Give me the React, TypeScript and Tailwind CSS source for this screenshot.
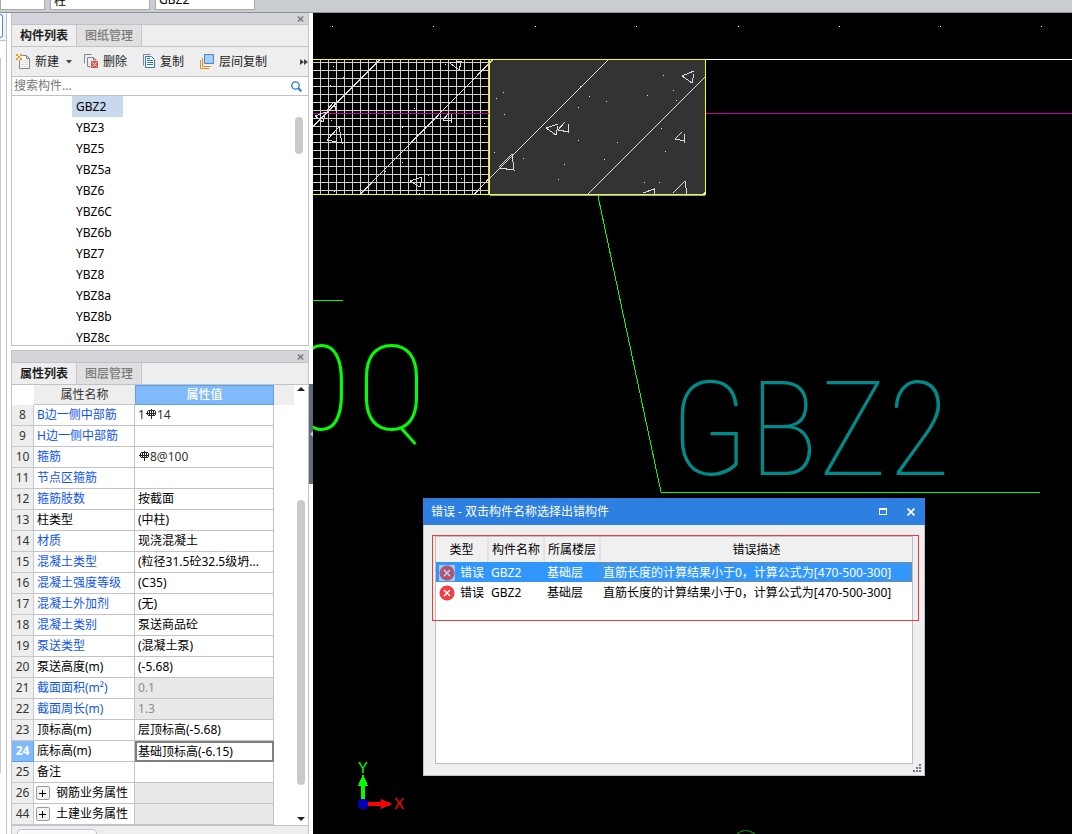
import React from "react";

const treeItems = ["GBZ2", "YBZ3", "YBZ5", "YBZ5a", "YBZ6", "YBZ6C", "YBZ6b", "YBZ7", "YBZ8", "YBZ8a", "YBZ8b", "YBZ8c"];

type Row = {
  no: number;
  name: string;
  value?: React.ReactNode;
  blue?: boolean;
  disabled?: boolean;
  active?: boolean;
  group?: boolean;
};

function Rebar() {
  return (
    <svg width="10" height="10" viewBox="0 0 10 10" fill="none" stroke="#000" className="mx-px inline-block align-baseline" shapeRendering="crispEdges" aria-hidden="true">
      <path d="M5.5 0v10M2 1.5h7M1.500 2v4M9.500 2v4M2 6.500h7M0 4.500h10M3.500 1v5M7.500 1v5" strokeOpacity=".85" />
    </svg>
  );
}

const rows: Row[] = [
  { no: 8, name: "B边一侧中部筋", value: <span className="text-[#333]">1<Rebar />14</span>, blue: true },
  { no: 9, name: "H边一侧中部筋", blue: true },
  { no: 10, name: "箍筋", value: <span className="text-[#333]"><Rebar />8@100</span>, blue: true },
  { no: 11, name: "节点区箍筋", blue: true },
  { no: 12, name: "箍筋肢数", value: "按截面", blue: true },
  { no: 13, name: "柱类型", value: "(中柱)" },
  { no: 14, name: "材质", value: "现浇混凝土", blue: true },
  { no: 15, name: "混凝土类型", value: "(粒径31.5砼32.5级坍...", blue: true },
  { no: 16, name: "混凝土强度等级", value: "(C35)", blue: true },
  { no: 17, name: "混凝土外加剂", value: "(无)", blue: true },
  { no: 18, name: "混凝土类别", value: "泵送商品砼", blue: true },
  { no: 19, name: "泵送类型", value: "(混凝土泵)", blue: true },
  { no: 20, name: "泵送高度(m)", value: "(-5.68)" },
  { no: 21, name: "截面面积(m²)", value: "0.1", blue: true, disabled: true },
  { no: 22, name: "截面周长(m)", value: "1.3", blue: true, disabled: true },
  { no: 23, name: "顶标高(m)", value: "层顶标高(-5.68)" },
  { no: 24, name: "底标高(m)", value: "基础顶标高(-6.15)", active: true },
  { no: 25, name: "备注" },
  { no: 26, name: "钢筋业务属性", group: true, disabled: true },
  { no: 44, name: "土建业务属性", group: true, disabled: true },
];

const errors = [
  { type: "错误", name: "GBZ2", floor: "基础层", text: "直筋长度的计算结果小于0，计算公式为[470-500-300]" },
  { type: "错误", name: "GBZ2", floor: "基础层", text: "直筋长度的计算结果小于0，计算公式为[470-500-300]" },
];

const vGrid = Array.from({ length: 22 }, (_, i) => 320.5 + i * 8);
const hGrid = Array.from({ length: 17 }, (_, i) => 62.5 + i * 8);
const rulerDots = [332, 433, 535, 636, 738, 839, 940, 1041];
const specks = [
  [503, 92], [496, 98], [504, 114], [663, 75], [673, 90], [647, 95], [676, 100], [589, 96], [606, 101], [580, 86],
  [578, 107], [578, 140], [617, 142], [661, 128], [665, 151], [494, 152], [523, 158], [564, 164], [604, 159],
  [558, 179], [644, 182], [659, 182], [333, 66], [343, 77], [330, 85], [445, 64], [417, 89], [414, 108],
  [484, 123], [331, 120], [389, 139], [402, 162], [428, 175], [461, 178], [334, 191], [419, 193], [385, 171], [402, 127],
];

function PanelHead({ tabs }: { tabs: [string, string] }) {
  return (
    <>
      <div className="flex h-3 shrink-0 items-center justify-end border-b border-[#bfc2c8] bg-[#d3d5da] pr-1">
        <button aria-label="关闭" className="flex h-2 w-2 items-center justify-center">
          <svg width="7" height="6" viewBox="0 0 7 6" stroke="#777" strokeWidth="1.4"><path d="M.8 .5 6.2 5.5M6.2 .5 .8 5.5" /></svg>
        </button>
      </div>
      <div role="tablist" className="flex h-[22px] shrink-0 border-b border-[#bfc2c8] bg-[#eeeeee]">
        <button role="tab" aria-selected="true" className="w-16 font-bold text-[#222]">{tabs[0]}</button>
        <button role="tab" aria-selected="false" className="w-[66px] border-x border-[#c5c8cd] bg-[#e0e0e0] font-medium text-[#7b7b7b]">{tabs[1]}</button>
      </div>
    </>
  );
}

function Toolbar() {
  return (
    <div className="flex h-[30px] shrink-0 items-center border-b border-[#bfc2c8] bg-[#eeeeee] pl-1 text-[#222]">
      <button className="flex w-[68px] items-center gap-1">
        <svg width="15" height="15" viewBox="0 0 15 15" fill="none">
          <path d="M3.5 1.5h7l3 3v10h-10z" fill="#fafafa" stroke="#7b8794" />
          <path d="M10.5 1.5v3h3" stroke="#7b8794" />
          <path d="M5 6.5h7M5 8.5h7M5 10.5h7M5 12.5h7" stroke="#ddd" />
          <path d="M0 0h6v6H0z" fill="#eee" />
          <path d="M0 0h2v2H0zM4 0h2v2H4zM2 2h2v2H2zM0 4h2v2H0zM4 4h2v2H4z" fill="#f39a1e" />
        </svg>
        <span className="flex-1 text-left">新建</span>
        <svg width="6" height="4" viewBox="0 0 6 4" className="mr-3"><path d="M0 0h6L3 3.5z" fill="#444" /></svg>
      </button>
      <button className="flex w-[58px] items-center gap-1">
        <svg width="15" height="15" viewBox="0 0 15 15" fill="none">
          <path d="M.5 9.500v-9h7M3.500 12.500v-9h6l2.500 2.500" stroke="#7b8794" />
          <path d="M3.500 12.500h3M9.500 3.500v2.500h3" stroke="#7b8794" />
          <path d="M7 7h7v7H7z" fill="#d9534f" />
          <path d="m8.500 8.500 4 4m0-4-4 4" stroke="#fff" />
        </svg>
        <span>删除</span>
      </button>
      <button className="flex w-[58px] items-center gap-1">
        <svg width="14" height="15" viewBox="0 0 14 15" fill="none">
          <path d="M1.500 11.500v-11h7" stroke="#7b8794" />
          <path d="M3.500 2.500h6l3 3v8h-9z" fill="#fff" stroke="#2f76c9" />
          <path d="M5 6.500h6M5 8.500h6M5 10.500h6M5 4.500h3" stroke="#2f76c9" />
        </svg>
        <span>复制</span>
      </button>
      <button className="flex items-center gap-1">
        <svg width="15" height="15" viewBox="0 0 15 15" fill="none">
          <path d="M.5 6v8.500H9M2.500 4v8.500H11" stroke="#ef8a24" />
          <path d="M4.500.5h9v9h-9z" fill="#a9cdfb" stroke="#3f86dd" />
        </svg>
        <span>层间复制</span>
      </button>
      <button aria-label="更多" className="ml-auto">
        <svg width="8" height="6" viewBox="0 0 8 6"><path d="M0 0 4 3 0 6zM4 0 8 3 4 6z" fill="#444" /></svg>
      </button>
    </div>
  );
}

function ComponentPanel() {
  return (
    <section className="flex h-[333px] shrink-0 flex-col overflow-hidden border-x border-b border-[#bfc2c8]">
      <PanelHead tabs={["构件列表", "图纸管理"]} />
      <Toolbar />
      <label className="flex h-[19px] shrink-0 items-center border-b border-[#bfc2c8] bg-white pr-1.5 pl-0.5">
        <input aria-label="搜索构件" placeholder="搜索构件..." className="min-w-0 flex-1 bg-transparent outline-none placeholder:text-[#777]" />
        <svg width="11" height="11" viewBox="0 0 11 11" fill="none" stroke="#1f7fc4">
          <circle cx="4.500" cy="4.500" r="3.700" strokeWidth="1.300" />
          <path d="m7.300 7.300 3 3" strokeWidth="2" />
        </svg>
      </label>
      <div className="flex min-h-0 flex-1 bg-white pr-[5px]">
        <ul className="min-w-0 flex-1 overflow-hidden pl-[60px] text-black">
          {treeItems.map((t, i) => (
            <li key={t} className={i === 0 ? "h-[21px] w-[51px] bg-[#c8d8ef] pl-1 leading-[21px]" : "h-[21px] w-[51px] pl-1 leading-[21px]"}>{t}</li>
          ))}
        </ul>
        <div className="mt-[21px] h-[37px] w-2 rounded bg-[#c9c9c9]" />
      </div>
    </section>
  );
}

function PropertyTable() {
  return (
    <table className="w-[262px] table-fixed border-separate border-spacing-0 bg-white text-left">
      <colgroup>
        <col className="w-[22px]" />
        <col className="w-[101px]" />
        <col className="w-[139px]" />
      </colgroup>
      <thead>
        <tr className="h-5">
          <th className="p-0" aria-label="序号" />
          <th className="border-b border-[#c5c8cd] bg-[#eeeeee] p-0 text-center font-normal text-[#333]">属性名称</th>
          <th className="border border-[#5f9fe6] bg-[#80bafa] p-0 text-center font-medium text-white">属性值</th>
        </tr>
      </thead>
      <tbody>
        {rows.map((r) => (
          <tr key={r.no} className="h-[21px]">
            <th className={r.active ? "border-r border-b border-[#5f9fe6] bg-[#80bafa] p-0 text-center font-bold text-white" : "border-r border-b border-[#c5c8cd] bg-[#eeeeee] p-0 text-center font-normal text-[#333]"}>{r.no}</th>
            <td className={r.blue ? "truncate border-r border-b border-[#c0c3c9] p-0 pl-[3px] text-[#0f55f0]" : "truncate border-r border-b border-[#c0c3c9] p-0 pl-[3px] text-black"}>
              {r.group ? (
                <span className="-ml-px flex items-center gap-1.5">
                  <button aria-label="展开" className="flex h-[14px] w-[14px] items-center justify-center rounded-xs border border-[#999] bg-[#f4f4f4]">
                    <svg width="8" height="8" viewBox="0 0 8 8" stroke="#000" shapeRendering="crispEdges"><path d="M0 4.500h7M3.500 1v7" /></svg>
                  </button>
                  <span>{r.name}</span>
                </span>
              ) : (
                r.name
              )}
            </td>
            <td
              className={
                r.active
                  ? "border-2 border-[#7f7f7f] p-0 pl-px whitespace-nowrap text-black"
                  : r.disabled
                    ? "border-r border-b border-[#c0c3c9] bg-[#e9e9e9] p-0 pl-[3px] whitespace-nowrap text-[#8c8c8c]"
                    : "border-r border-b border-[#c0c3c9] p-0 pl-[3px] whitespace-nowrap text-black"
              }
            >
              {r.value}
            </td>
          </tr>
        ))}
      </tbody>
    </table>
  );
}

function PropertyPanel() {
  return (
    <section className="mt-1 flex min-h-0 flex-1 flex-col overflow-hidden border-x border-t border-[#bfc2c8] bg-[#eeeeee]">
      <PanelHead tabs={["属性列表", "图层管理"]} />
      <div className="flex shrink-0 border-b border-[#bfc2c8] bg-white">
        <PropertyTable />
        <div className="flex flex-1">
          <div className="h-5 w-5 bg-[#eeeeee]" />
          <div className="flex flex-1 flex-col items-center pt-0.5">
            <svg width="8" height="4" viewBox="0 0 8 4"><path d="M0 4 4 0l4 4z" fill="#222" /></svg>
            <div className="mt-[109px] w-2 flex-1 rounded bg-[#c9c9c9]" />
            <svg width="8" height="4" viewBox="0 0 8 4" className="mt-8 mb-1"><path d="M0 0h8L4 4z" fill="#222" /></svg>
          </div>
        </div>
      </div>
      <div className="mt-[3px] ml-[5px] h-5 w-20 shrink-0 rounded-sm border border-[#bfc2c8] bg-[#fafafa]" />
    </section>
  );
}

function Drawing() {
  return (
    <svg className="absolute top-0 left-0" width="759" height="821" viewBox="313 13 759 821" fill="none" shapeRendering="crispEdges" aria-label="图纸">
      {rulerDots.map((x) => <rect key={x} x={x} y="26" width="1" height="1" fill="#fff" />)}
      <rect x="490" y="60" width="215" height="134" fill="#333" />
      <g stroke="#cfcfcf">
        {vGrid.map((x) => <path key={x} d={`M${x} 60V194`} />)}
        {hGrid.map((y) => <path key={y} d={`M313 ${y}H489`} />)}
      </g>
      <path d="M313 113.500H489M706 113.500H1072" stroke="#c4009c" />
      <g stroke="#dcdcdc">
        <path d="M379.500 60 313.500 126M492.500 60 360.500 194M489.500 178 474.500 194M608 60 490 178M705 77 588 194" />
        <path d="M694 71 682 76 692 83 694 74M558 124 546 128 556 135 558 126M558 130 565 122M568 124 569 133M558 130 569 132" />
        <path d="M499 167 512 154 514 170 499 168M675 139 682 132M684 134 685 143M675 139 685 141M673 193 685 181 687 194M643 193 654 189V194M703 194 706 192" />
        <path d="M462 61 450 63 459 70 461 63M443 120 449 113M451 114 452 123M443 120 452 121M327 140 339 127 342 143 327 140M326 112 315 116 323 122 326 112M327 110 334 102 336 111M422 177 410 181 420 187 422 178" />
      </g>
      {specks.map(([x, y]) => <rect key={`${x}-${y}`} x={x} y={y} width="1" height="1" fill="#e4e4e4" />)}
      <path d="M490 195.500H705" stroke="#8f9fd0" />
      <path d="M313 59.500H705.500V194.500H313M489.500 59V195" stroke="#ff0" />
      <path d="M706 59.500H1072" stroke="#fff" />
      <path d="M598 196 661 492M661 492.500H1040M313 300.500H343" stroke="#0f0" />
      <path d="M737 834Q745 827 755 834" stroke="#008000" />
      <g shapeRendering="auto" fontFamily="'Roboto Condensed', 'Liberation Sans Narrow', Roboto, sans-serif" fontWeight="100">
        <text x="670" y="475" fontSize="131" fill="#008b8b">GBZ2</text>
        <text x="293" y="430" fontSize="118" fill="#0f0">0</text>
        <text x="357" y="430" fontSize="118" fill="#0f0">Q</text>
      </g>
      <g shapeRendering="auto" fontFamily="Lato, sans-serif" fontSize="15" textAnchor="middle">
        <text x="363" y="773" fill="#0f0">Y</text>
        <text x="399" y="809" fill="#f00">X</text>
      </g>
      <path d="M361 800V786H358L363 774 368 786H365V800z" fill="#0f0" />
      <path d="M366 802H381V799L392 804 381 809V806H366z" fill="#f00" />
      <circle cx="363" cy="804" r="5.500" fill="#0000b8" />
    </svg>
  );
}

function ErrorIcon({ selected }: { selected: boolean }) {
  return (
    <svg width="16" height="16" viewBox="0 0 16 16" aria-hidden="true" className="shrink-0">
      {selected && <path d="M0 0h16v16H0z" fill="#a9c9ee" />}
      <circle cx="8" cy="8" r="7.500" fill={selected ? "#b0546f" : "#f03e43"} />
      <path d="m5 5 6 6m0-6-6 6" stroke={selected ? "#b9d5f5" : "#fff"} strokeWidth="1.500" />
    </svg>
  );
}

function ErrorDialog() {
  return (
    <div role="dialog" aria-label="错误" className="absolute top-[485px] left-[110px] flex h-[278px] w-[502px] flex-col border-x border-b border-[#bcc3cf] bg-[#efefef]">
      <header className="-mx-px flex h-[27px] shrink-0 items-center bg-[#2d7fe0] pr-2.5 pl-2 text-white">
        <h1 className="flex-1">错误 - 双击构件名称选择出错构件</h1>
        <button aria-label="最大化" className="mr-5">
          <svg width="8" height="7" viewBox="0 0 8 7" fill="none" stroke="#fff" shapeRendering="crispEdges"><path d="M.5 0v6.500h7V0M0 .5h8M0 1.500h8" /></svg>
        </button>
        <button aria-label="关闭">
          <svg width="8" height="8" viewBox="0 0 8 8" stroke="#fff" strokeWidth="1.700"><path d="m.5.5 7 7m0-7-7 7" /></svg>
        </button>
      </header>
      <div className="mx-[11px] mt-[11px] mb-[11px] flex-1 border border-[#bfbfc2] bg-white">
        <table className="w-full table-fixed border-collapse text-left">
          <colgroup>
            <col className="w-[52px]" />
            <col className="w-14" />
            <col className="w-14" />
            <col />
          </colgroup>
          <thead>
            <tr className="h-[25px] bg-[#f0f0f0]">
              <th className="border-r-2 border-[#e2e2e2] p-0 text-center font-normal">类型</th>
              <th className="border-r-2 border-[#e2e2e2] p-0 text-center font-normal">构件名称</th>
              <th className="border-r-2 border-[#e2e2e2] p-0 text-center font-normal">所属楼层</th>
              <th className="p-0 text-center font-normal">错误描述</th>
            </tr>
          </thead>
          <tbody>
            {errors.map((e, i) => (
              <tr key={i} className={i === 0 ? "h-5 bg-[#3297fd] text-white" : "h-5 text-black"}>
                <td className="p-0 pt-0.5 pl-[3px]"><span className="flex items-center gap-[5px] whitespace-nowrap"><ErrorIcon selected={i === 0} />{e.type}</span></td>
                <td className="p-0 pt-0.5 pl-[3px]">{e.name}</td>
                <td className="p-0 pt-0.5 pl-[3px]">{e.floor}</td>
                <td className={i === 0 ? "p-0 pt-0.5 pl-[3px] whitespace-nowrap outline-1 -outline-offset-1 outline-[#c07a30] outline-dotted" : "p-0 pt-0.5 pl-[3px] whitespace-nowrap"}>{e.text}</td>
              </tr>
            ))}
          </tbody>
        </table>
      </div>
      <div className="pointer-events-none absolute top-[37px] right-[5px] left-2 h-[86px] border border-[#f23b3b]" />
      <svg width="8" height="8" viewBox="0 0 8 8" className="absolute right-[3px] bottom-[3px]" fill="#6d7480">
        <path d="M6 0h2v2H6zM3 3h2v2H3zM6 3h2v2H6zM0 6h2v2H0zM3 6h2v2H3zM6 6h2v2H6z" />
      </svg>
    </div>
  );
}

export default function App() {
  return (
    <div className="flex h-screen flex-col overflow-hidden bg-white font-['Noto_Sans','Noto_Sans_CJK_SC',sans-serif] text-[12px] leading-4">
      <header className="flex h-[13px] shrink-0 items-end gap-[5px] border-b border-[#8d9096] bg-[#c9ccd1] pb-[2px]">
        <input aria-label="楼层" className="h-[21px] w-[45px] border border-[#a8abb0] bg-white px-1" />
        <input aria-label="构件类型" defaultValue="柱" className="h-[21px] w-[100px] border border-[#a8abb0] bg-white px-[3px]" />
        <input aria-label="构件" defaultValue="GBZ2" className="h-[21px] w-[100px] border border-[#a8abb0] bg-white px-[3px]" />
      </header>
      <div className="flex min-h-0 flex-1">
        <aside className="flex w-[7px] shrink-0 flex-col border-r border-[#bfc2c8] bg-white">
          <div className="h-7 border-b border-[#bfc2c8] bg-[#eff1f4] pt-px">
            <div className="h-6 w-[3px] rounded-r-sm border-y border-r border-[#3f95ea] bg-white" />
          </div>
          <div className="mt-[17px] mb-[61px] w-px flex-1 bg-[#c9c9c9]" />
        </aside>
        <div className="ml-1 flex w-[298px] shrink-0 flex-col">
          <ComponentPanel />
          <PropertyPanel />
        </div>
        <div className="flex w-1 shrink-0 flex-col pt-[371px]">
          <button aria-label="折叠面板" className="flex h-[100px] w-full items-center justify-end bg-[#5f6b76]">
            <svg width="3" height="6" viewBox="0 0 3 6"><path d="M3 0v6L0 3z" fill="#c3c8cc" /></svg>
          </button>
        </div>
        <main className="relative min-w-0 flex-1 overflow-hidden bg-black">
          <Drawing />
          <ErrorDialog />
        </main>
      </div>
    </div>
  );
}
